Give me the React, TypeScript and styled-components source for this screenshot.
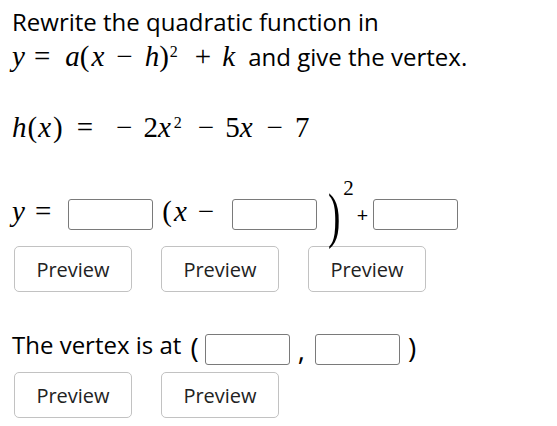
import React from "react";
import styled, { createGlobalStyle } from "styled-components";

const GlobalStyle = createGlobalStyle`
  html, body {
    margin: 0;
    padding: 0;
    background: #ffffff;
  }
  body {
    font-family: "Open Sans", "Liberation Sans", sans-serif;
    color: #000000;
  }
`;

const Page = styled.div`
  padding: 5px 12px 0 12px;
  width: 557px;
  height: 426px;
  box-sizing: border-box;
  overflow: hidden;
`;

const Prompt = styled.p`
  margin: 0;
  font-size: 24px;
  line-height: 34px;
`;

// Math pieces (KaTeX-like, drawn with Liberation Serif)
const MathText = styled.span<{ $lift?: number; $after?: number }>`
  font-family: "Liberation Serif", "DejaVu Serif", serif;
  font-size: 29px;
  white-space: nowrap;
  margin-bottom: ${(p) => p.$lift ?? 0}px;
  margin-right: ${(p) => p.$after ?? 0}px;
`;

const Var = styled.span<{ $ml?: number }>`
  font-style: italic;
  margin-left: ${(p) => p.$ml ?? 0}px;
`;

const Sym = styled.span<{ $ml?: number; $mr?: number }>`
  margin-left: ${(p) => p.$ml ?? 0}px;
  margin-right: ${(p) => p.$mr ?? 0}px;
`;

const Sup = styled.sup<{ $ml?: number }>`
  font-size: 16px;
  line-height: 0;
  vertical-align: 9px;
  margin-left: ${(p) => p.$ml ?? 1}px;
`;

const FunctionLine = styled.div`
  margin-top: 33px;
  height: 40px;
  line-height: 40px;
`;

const AnswerRow = styled.div<{ $top: number; $height: number }>`
  display: flex;
  align-items: center;
  margin-top: ${(p) => p.$top}px;
  height: ${(p) => p.$height}px;
`;

const Slot = styled.span<{ $ml?: number }>`
  display: flex;
  align-items: center;
  margin-left: ${(p) => p.$ml ?? 0}px;
  line-height: 1;
`;

const AnswerInput = styled.input`
  box-sizing: border-box;
  width: 85px;
  height: 31px;
  border: 1px solid #7a7a7a;
  border-radius: 3px;
  background: #ffffff;
  padding: 0 4px;
  font-family: "Open Sans", sans-serif;
  font-size: 16px;
`;

const BigParen = styled.span`
  display: inline-block;
  font-family: "Liberation Serif", serif;
  font-size: 62px;
  line-height: 1;
  transform: scaleX(0.6);
  transform-origin: left center;
  width: 12px;
`;

const SupTwo = styled.span`
  align-self: flex-start;
  font-family: "Liberation Serif", serif;
  font-size: 21px;
  line-height: 1;
  margin-top: -10px;
  margin-left: 3px;
`;

const Plus = styled.span`
  font-size: 20px;
  line-height: 1;
  margin: 0 5px 0 3px;
`;

const VertexLabel = styled.span`
  font-size: 24px;
  line-height: 1;
  margin-bottom: 8px;
`;

const Paren = styled.span<{ $lift?: number }>`
  font-size: 28px;
  line-height: 1;
  margin-bottom: ${(p) => p.$lift ?? 4}px;
`;

const ButtonRow = styled.div<{ $top: number }>`
  display: flex;
  gap: 29px;
  margin-top: ${(p) => p.$top}px;
  margin-left: 2px;
`;

const PreviewButton = styled.button`
  box-sizing: border-box;
  width: 118px;
  height: 46px;
  background: #ffffff;
  border: 1px solid #c2c2c2;
  border-radius: 5px;
  font-family: "Open Sans", sans-serif;
  font-size: 20px;
  color: #222222;
  padding: 0;
  cursor: pointer;
`;

export default function App() {
  return (
    <>
      <GlobalStyle />
      <Page>
        <Prompt>
          Rewrite the quadratic function in
          <br />
          <MathText $after={7}>
            <Var>y</Var>
            <Sym $ml={9} $mr={15}>=</Sym>
            <Var>a</Var>(<Var $ml={2}>x</Var>
            <Sym $ml={12} $mr={12}>−</Sym>
            <Var>h</Var>)<Sup>2</Sup>
            <Sym $ml={17} $mr={11}>+</Sym>
            <Var>k</Var>
          </MathText>{" "}
          and give the vertex.
        </Prompt>

        <FunctionLine>
          <MathText>
            <Var>h</Var>
            <Sym $ml={1}>(</Sym>
            <Var $ml={1}>x</Var>
            <Sym $ml={2}>)</Sym>
            <Sym $ml={14} $mr={23}>=</Sym>−<Sym $ml={11}>2</Sym>
            <Var>x</Var>
            <Sup $ml={3}>2</Sup>
            <Sym $ml={16} $mr={11}>−</Sym>5<Var>x</Var>
            <Sym $ml={14} $mr={12}>−</Sym>7
          </MathText>
        </FunctionLine>

        <AnswerRow $top={41} $height={53}>
          <Slot>
            <MathText $lift={7}>
              <Var>y</Var>
              <Sym $ml={10}>=</Sym>
            </MathText>
          </Slot>
          <Slot $ml={17}>
            <AnswerInput aria-label="a" />
          </Slot>
          <Slot $ml={9}>
            <MathText $lift={7}>
              (<Var $ml={2}>x</Var>
              <Sym $ml={11}>−</Sym>
            </MathText>
          </Slot>
          <Slot $ml={18}>
            <AnswerInput aria-label="h" />
          </Slot>
          <Slot $ml={11}>
            <BigParen>)</BigParen>
          </Slot>
          <SupTwo>2</SupTwo>
          <Plus>+</Plus>
          <AnswerInput aria-label="k" />
        </AnswerRow>

        <ButtonRow $top={5}>
          <PreviewButton>Preview</PreviewButton>
          <PreviewButton>Preview</PreviewButton>
          <PreviewButton>Preview</PreviewButton>
        </ButtonRow>

        <AnswerRow $top={37} $height={40}>
          <VertexLabel>The vertex is at</VertexLabel>
          <Slot $ml={9}>
            <Paren>(</Paren>
          </Slot>
          <Slot $ml={6}>
            <AnswerInput aria-label="vertex x" />
          </Slot>
          <Slot $ml={8}>
            <Paren $lift={0}>,</Paren>
          </Slot>
          <Slot $ml={10}>
            <AnswerInput aria-label="vertex y" />
          </Slot>
          <Slot $ml={8}>
            <Paren>)</Paren>
          </Slot>
        </AnswerRow>

        <ButtonRow $top={3}>
          <PreviewButton>Preview</PreviewButton>
          <PreviewButton>Preview</PreviewButton>
        </ButtonRow>
      </Page>
    </>
  );
}
